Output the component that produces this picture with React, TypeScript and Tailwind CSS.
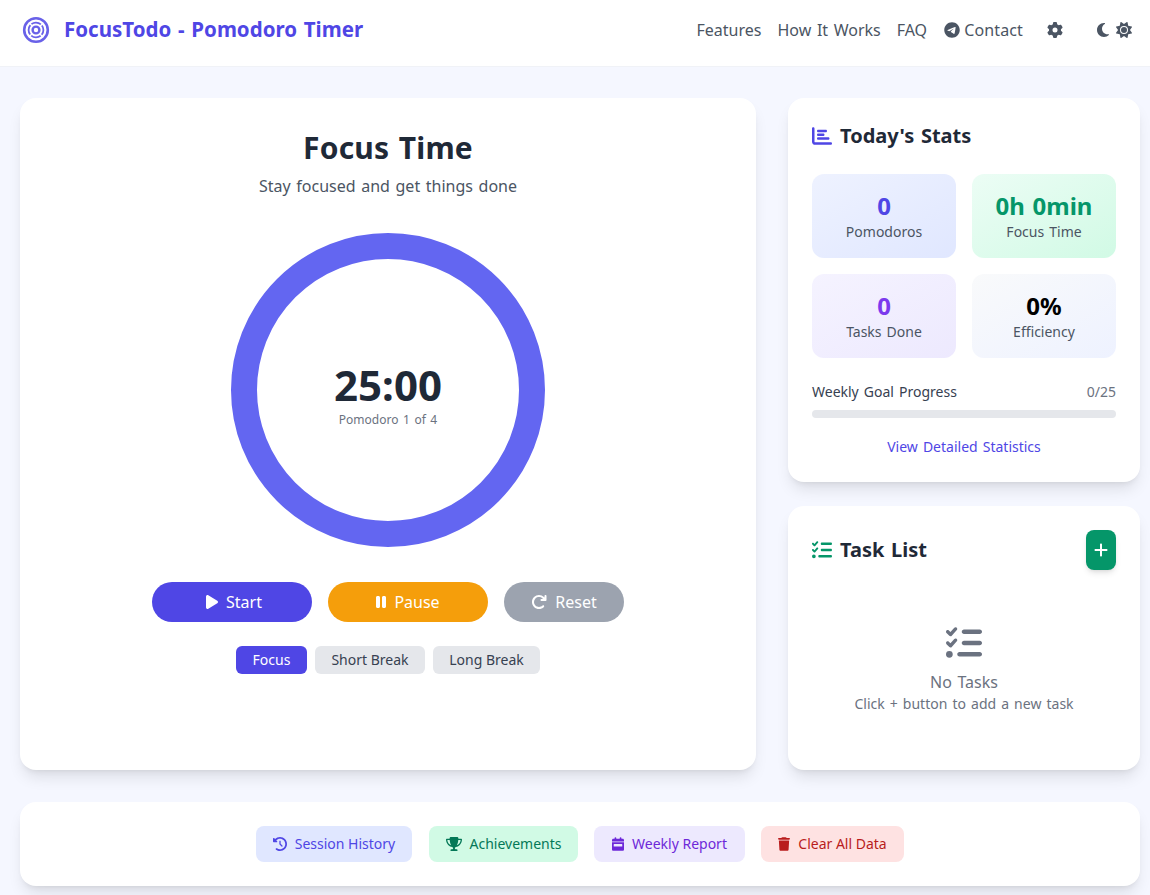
import React from "react";
import { FaGear, FaMoon, FaSun, FaTelegram, FaChartBar, FaListCheck, FaPlus, FaPlay, FaPause, FaArrowRotateRight, FaClockRotateLeft, FaTrophy, FaCalendarWeek, FaTrash } from "react-icons/fa6";

function Logo() {
  return (
    <svg width="28" height="28" viewBox="0 0 28 28" fill="none" stroke="#4f46e5" className="opacity-85">
      <circle cx="14" cy="14" r="11.8" strokeWidth="2.6" />
      <circle cx="14" cy="14" r="7.4" strokeWidth="1.8" strokeDasharray="10.1 1.5" strokeDashoffset="5" />
      <circle cx="14" cy="14" r="3.4" strokeWidth="2.4" />
    </svg>
  );
}

function Tile({ value, label, bg, color }: { value: string; label: string; bg: string; color: string }) {
  return (
    <div className={`h-[84px] rounded-xl flex flex-col items-center justify-center ${bg}`}>
      <div className={`text-2xl font-bold leading-8 ${color}`}>{value}</div>
      <div className="text-sm leading-5 text-[#4b5563]">{label}</div>
    </div>
  );
}

export default function App() {
  return (
    <div className="min-h-[895px] bg-[#f5f7ff] font-['Noto_Sans','Noto_Sans_CJK_SC',sans-serif] [word-spacing:0.09em] text-[#1f2937]">
      <header className="h-[67px] bg-white border-b border-[#f0f2f7] pl-[22px] pr-[18px] pb-[7px] flex items-center justify-between">
        <div className="flex items-center gap-[14px]">
          <Logo />
          <span className="text-[20.5px] font-bold text-[#4f46e5]">FocusTodo - Pomodoro Timer</span>
        </div>
        <nav className="flex items-center text-[#4b5563] text-base">
          <span>Features</span>
          <span className="ml-4">How It Works</span>
          <span className="ml-4">FAQ</span>
          <span className="ml-[17px] flex items-center gap-1"><FaTelegram size={16} /><span className="tracking-[0.14px]">Contact</span></span>
          <FaGear size={16} className="ml-6" />
          <FaMoon className="ml-[34px] w-3 h-4" />
          <FaSun size={16} className="ml-[7px]" />
        </nav>
      </header>

      <main className="pl-5 pr-[10px] pt-[31px] pb-[9px]">
        <div className="grid grid-cols-3 gap-8">
          <section className="col-span-2 h-[672px] bg-white rounded-2xl shadow-lg flex flex-col items-center pt-8">
            <h1 className="text-3xl font-bold leading-9 tracking-[0.2px]">Focus Time</h1>
            <p className="mt-2 text-base leading-6 text-[#4b5563]">Stay focused and get things done</p>
            <div className="relative mt-[35px] w-[314px] h-[314px]">
              <svg width="314" height="314" viewBox="0 0 314 314">
                <circle cx="157" cy="157" r="144" fill="none" stroke="#6366f1" strokeWidth="26" />
              </svg>
              <div className="absolute inset-0 pt-[9px] flex flex-col items-center justify-center">
                <div className="text-[42px] font-bold leading-[48px]">25:00</div>
                <div className="mt-[3px] text-xs leading-4 text-[#6b7280]">Pomodoro 1 of 4</div>
              </div>
            </div>
            <div className="mt-[35px] flex gap-4">
              <button className="w-40 h-10 pl-1 rounded-full bg-[#4f46e5] text-white flex items-center justify-center gap-2"><FaPlay className="w-3 h-4" />Start</button>
              <button className="w-40 h-10 rounded-full bg-[#f59e0b] text-white flex items-center justify-center gap-2"><FaPause className="w-2.5 h-4" />Pause</button>
              <button className="w-[120px] h-10 rounded-full bg-[#9ca3af] text-white flex items-center justify-center gap-2"><FaArrowRotateRight size={16} />Reset</button>
            </div>
            <div className="mt-6 flex gap-2 text-sm">
              <button className="h-7 w-[71px] rounded-md bg-[#4f46e5] text-white">Focus</button>
              <button className="h-7 w-[110px] rounded-md bg-[#e5e7eb] text-[#374151]">Short Break</button>
              <button className="h-7 w-[107px] rounded-md bg-[#e5e7eb] text-[#374151]">Long Break</button>
            </div>
          </section>

          <aside className="flex flex-col gap-6">
            <section className="h-[384px] bg-white rounded-2xl shadow-lg px-6 pt-6">
              <div className="flex items-center gap-2 h-7">
                <FaChartBar size={20} className="text-[#4f46e5]" />
                <h2 className="text-xl font-bold">Today's Stats</h2>
              </div>
              <div className="mt-6 grid grid-cols-2 gap-4">
                <Tile value="0" label="Pomodoros" bg="bg-gradient-to-br from-[#eef2ff] to-[#e0e7ff]" color="text-[#4f46e5]" />
                <Tile value="0h 0min" label="Focus Time" bg="bg-gradient-to-br from-[#ecfdf5] to-[#d1fae5]" color="text-[#059669]" />
                <Tile value="0" label="Tasks Done" bg="bg-gradient-to-br from-[#f5f3ff] to-[#ede9fe]" color="text-[#7c3aed]" />
                <Tile value="0%" label="Efficiency" bg="bg-gradient-to-br from-[#f9fafb] to-[#eef2ff]" color="text-black" />
              </div>
              <div className="mt-6 flex justify-between text-sm leading-5">
                <span className="text-[#374151]">Weekly Goal Progress</span>
                <span className="text-[#6b7280]">0/25</span>
              </div>
              <div className="mt-2 h-2 rounded-full bg-[#e5e7eb]" />
              <div className="mt-[19px] text-center text-sm leading-5 text-[#4f46e5]">View Detailed Statistics</div>
            </section>

            <section className="h-[264px] bg-white rounded-2xl shadow-lg px-6 pt-6">
              <div className="flex items-center justify-between">
                <div className="flex items-center gap-2">
                  <FaListCheck size={20} className="text-[#059669]" />
                  <h2 className="text-xl font-bold">Task List</h2>
                </div>
                <button className="w-[30px] h-10 rounded-lg bg-[#059669] text-white flex items-center justify-center shadow-md"><FaPlus size={16} /></button>
              </div>
              <div className="mt-[55px] flex flex-col items-center text-[#6b7280]">
                <FaListCheck size={36} />
                <div className="mt-[9px] text-base leading-6">No Tasks</div>
                <div className="text-sm leading-5">Click + button to add a new task</div>
              </div>
            </section>
          </aside>
        </div>

        <section className="mt-8 h-[84px] bg-white rounded-2xl shadow-lg flex items-center justify-center gap-4 text-sm">
          <button className="h-9 w-[156px] mr-px rounded-lg bg-[#e0e7ff] text-[#4f46e5] flex items-center justify-center gap-2"><FaClockRotateLeft size={14} />Session History</button>
          <button className="h-9 w-[149px] rounded-lg bg-[#d1fae5] text-[#047857] flex items-center justify-center gap-2"><FaTrophy size={16} />Achievements</button>
          <button className="h-9 w-[151px] rounded-lg bg-[#ede9fe] text-[#6d28d9] flex items-center justify-center gap-2"><FaCalendarWeek className="w-3 h-3.5" />Weekly Report</button>
          <button className="h-9 w-[143px] rounded-lg bg-[#fee2e2] text-[#b91c1c] flex items-center justify-center gap-2"><FaTrash className="w-3 h-3.5" />Clear All Data</button>
        </section>
      </main>
    </div>
  );
}
